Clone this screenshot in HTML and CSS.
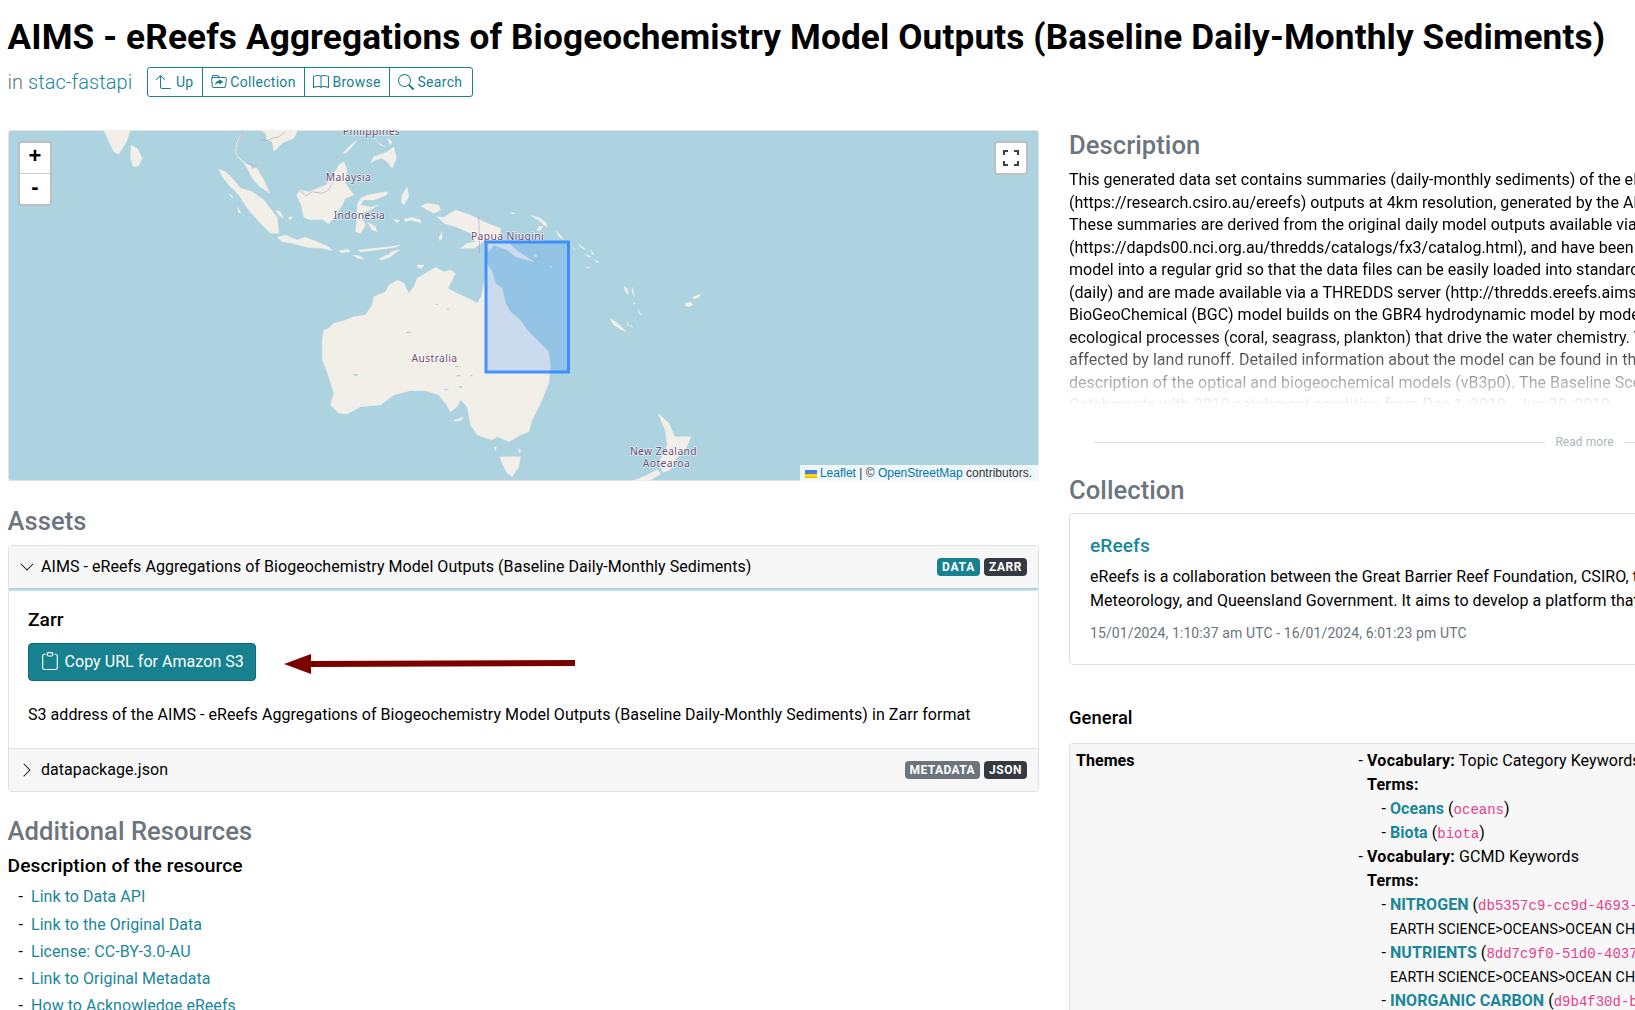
FILE: index.html
```html
<!DOCTYPE html>
<html lang="en">
<head>
  <meta charset="UTF-8" />
  <title>AIMS - eReefs Aggregations of Biogeochemistry Model Outputs</title>
  <link rel="stylesheet" href="styles.css">
</head>
<body>
  <h1>AIMS - eReefs Aggregations of Biogeochemistry Model Outputs (Baseline Daily-Monthly Sediments)</h1>
  <div class="subtitle">
    <span class="catalog"><span class="in">in</span> <a href="#">stac-fastapi</a></span>
    <div class="btn-group">
      <a href="#" class="btn"><svg class="icon" viewBox="0 0 16 16"><path d="M4.854 1.146a.5.5 0 0 0-.708 0l-4 4a.5.5 0 1 0 .708.708L4 2.707V12.5A2.5 2.5 0 0 0 6.5 15h8a.5.5 0 0 0 0-1h-8A1.5 1.5 0 0 1 5 12.5V2.707l3.146 3.147a.5.5 0 1 0 .708-.708l-4-4z"/></svg> Up</a>
      <a href="#" class="btn"><svg class="icon" viewBox="0 0 16 16"><path d="m11.798 8.271-3.182 1.97c-.27.166-.616-.036-.616-.372V9.1s-2.571-.3-4 2.4c.571-4.8 3.143-4.8 4-4.8v-.769c0-.336.346-.538.616-.371l3.182 1.969c.27.166.27.576 0 .742z"/><path d="m.5 3 .04.87a1.99 1.99 0 0 0-.342 1.311l.637 7A2 2 0 0 0 2.826 14h10.348a2 2 0 0 0 1.991-1.819l.637-7A2 2 0 0 0 13.81 3H9.828a2 2 0 0 1-1.414-.586l-.828-.828A2 2 0 0 0 6.172 1H2.5a2 2 0 0 0-2 2zm.694 2.09A1 1 0 0 1 2.19 4h11.62a1 1 0 0 1 .996 1.09l-.636 7a1 1 0 0 1-.996.91H2.826a1 1 0 0 1-.995-.91l-.637-7zM6.172 2a1 1 0 0 1 .707.293L7.586 3H2.19c-.24 0-.47.042-.683.12L1.5 2.98a1 1 0 0 1 1-.98h3.672z"/></svg> Collection</a>
      <a href="#" class="btn"><svg class="icon" viewBox="0 0 16 16"><path d="M1 2.828c.885-.37 2.154-.769 3.388-.893 1.33-.134 2.458.063 3.112.752v9.746c-.935-.53-2.12-.603-3.213-.493-1.18.12-2.37.461-3.287.811V2.828zm7.5-.141c.654-.689 1.782-.886 3.112-.752 1.234.124 2.503.523 3.388.893v9.923c-.918-.35-2.107-.692-3.287-.81-1.094-.111-2.278-.039-3.213.492V2.687zM8 1.783C7.015.936 5.587.81 4.287.94c-1.514.153-3.042.672-3.994 1.105A.5.5 0 0 0 0 2.5v11a.5.5 0 0 0 .707.455c.882-.4 2.303-.881 3.68-1.02 1.409-.142 2.59.087 3.223.877a.5.5 0 0 0 .78 0c.633-.79 1.814-1.019 3.222-.877 1.378.139 2.8.62 3.681 1.02A.5.5 0 0 0 16 13.5v-11a.5.5 0 0 0-.293-.455c-.952-.433-2.48-.952-3.994-1.105C10.413.809 8.985.936 8 1.783z"/></svg> Browse</a>
      <a href="#" class="btn"><svg class="icon" viewBox="0 0 16 16"><path d="M11.742 10.344a6.5 6.5 0 1 0-1.397 1.398h-.001c.03.04.062.078.098.115l3.85 3.85a1 1 0 0 0 1.415-1.414l-3.85-3.85a1.007 1.007 0 0 0-.115-.1zM12 6.5a5.5 5.5 0 1 1-11 0 5.5 5.5 0 0 1 11 0z"/></svg> Search</a>
    </div>
  </div>

  <div class="columns">
    <div class="col">
      <div class="map">
        <svg class="map-canvas" viewBox="7.5 130 1031.5 351">
          <g class="land">
            <!-- india, sri lanka -->
            <g transform="translate(0 125) scale(.3333)">
              <path d="M310 15 390 15 378 50 355 88 340 80 325 50Z"/>
              <path d="M392 60 412 72 425 100 415 122 398 125 390 100Z"/>
            </g>
            <!-- south east asia -->
            <g transform="translate(210 130) scale(.3333)">
              <path d="M25 118 45 125 70 150 90 175 125 185 160 210 200 262 205 310 180 310 150 280 110 235 85 195 55 165 35 140Z"/>
              <path d="M200 322 225 315 260 330 285 322 320 335 355 350 365 362 335 355 290 352 245 340 215 335Z"/>
              <path d="M385 362 415 358 418 366 392 368ZM442 360 490 355 535 350 570 345 555 352 500 360 450 366ZM505 388 545 365 570 358 540 380 515 390ZM428 375 450 378 460 388 440 384Z"/>
              <path d="M95 5 85 35 75 60 80 78 100 95 125 110 140 115 160 150 178 190 150 172 125 145 112 118 100 98 85 85 76 70 78 40Z"/>
              <path d="M150 0 262 0 250 25 215 40 190 65 185 35 170 30 165 10Z"/>
              <path d="M258 195 270 180 295 185 345 165 365 140 385 105 400 95 410 120 405 160 430 195 405 205 395 225 380 250 355 282 335 268 300 270 280 262 272 225Z"/>
              <path d="M440 225 450 205 470 195 530 185 530 195 490 210 460 210 450 225 480 232 505 225 480 240 460 245 455 265 465 285 450 310 435 305 440 265ZM470 275 495 290 500 305 485 300Z"/>
              <path d="M480 100 490 80 530 65 550 50 558 85 545 115 530 95 515 85 495 90ZM397 70 420 45 440 30 425 50 405 70ZM490 20 510 45 525 50 505 40ZM530 25 545 35 540 45Z"/>
              <path d="M575 195 590 170 595 200 580 225 572 215ZM548 268 568 270 560 278ZM580 268 605 262 630 270 632 278 600 270 585 275ZM195 240 210 245 218 265 205 255ZM235 262 245 260 243 268 235 268ZM55 190 68 200 65 205ZM80 230 92 250 85 248ZM620 405 640 407 625 415Z"/>
              <path d="M632 228 650 220 685 225 690 240 670 250 650 240ZM680 260 700 262 735 240 780 255 830 280 870 295 870 330 825 330 805 345 790 355 750 355 770 340 795 335 780 310 735 290 700 280ZM685 325 695 305 695 325 688 332Z"/>
            </g>
            <!-- png and pacific islands -->
            <g transform="translate(460 200) scale(.3333)">
              <path d="M75 130 145 130 175 155 220 185 190 178 165 170 140 150 100 135 85 155Z"/>
              <path d="M150 37 165 40 155 42ZM210 45 240 55 258 70 258 82 240 65ZM235 80 248 78 240 92 228 90ZM287 92 305 112 310 120 295 110ZM335 140 345 150 340 148ZM350 130 375 148 368 148ZM372 163 392 170 385 172ZM390 148 402 165 395 162ZM402 178 417 188 408 186ZM225 160 230 170 220 170ZM265 198 275 200 270 203Z"/>
              <path d="M490 258 500 265 505 285 495 275ZM515 262 522 290 516 280ZM518 305 525 312 520 312ZM532 328 542 345 536 340ZM448 355 470 368 498 395 480 388 460 375ZM500 365 505 378 502 378ZM510 375 518 382 512 380ZM675 310 690 305 697 315 685 320 675 318ZM695 292 720 283 715 292 700 297ZM378 200 388 204 382 205Z"/>
            </g>
            <!-- australia, tasmania -->
            <g transform="translate(310 260) scale(.3333)">
              <path d="M40 210 55 205 70 190 100 182 130 170 165 165 185 135 190 110 225 95 235 75 262 60 280 70 295 100 310 80 320 55 345 40 375 22 400 35 420 30 435 40 428 55 412 85 440 100 480 118 500 130 512 110 525 50 530 12 545 35 555 70 575 85 585 130 600 155 630 180 650 210 680 240 700 260 715 275 720 320 715 370 690 430 665 480 655 515 630 525 595 545 560 530 545 540 500 525 480 495 470 440 450 420 440 440 420 455 405 430 385 405 345 392 300 392 250 405 210 435 150 440 110 462 85 460 60 435 70 400 50 335 35 300 35 240Z"/>
              <path d="M568 590 630 590 625 620 605 650 590 640 575 610ZM430 480 460 472 450 482 432 484ZM320 15 340 15 332 26ZM552 560 558 562 555 572ZM622 565 630 570 628 580Z"/>
              <path class="lake" d="M288 215h14v4h-14zM375 132h6v3h-6zM408 146h8v3h-8zM130 342h12v5h-12zM434 318h10v4h-10zM438 345h12v4h-12zM445 378h10v5h-10zM480 345h6v4h-6zM400 388h14v3h-14z"/>
            </g>
            <!-- new zealand -->
            <path d="M658 414 668 423 674 437 690 437 685 449 676 458 669 470 662 472 660 460 667 445 665 430Z"/>
            <path d="M657 470 660 474 648 481 633 481 645 476Z"/>
          </g>
          <g class="borders">
            <g transform="translate(210 130) scale(.3333)">
              <path d="M97 0 80 45M150 30 170 32 185 25 205 20 225 5M105 98 125 105 125 115 140 105M270 183 285 198 305 185 335 190 355 180 370 150M805 258 807 370M530 362 535 375"/>
            </g>
          </g>
          <g class="labels">
            <text x="371" y="135" text-anchor="middle">Philippines</text>
            <text x="348" y="181" text-anchor="middle">Malaysia</text>
            <text x="359" y="219" text-anchor="middle">Indonesia</text>
            <text x="507" y="240" text-anchor="middle">Papua Niugini</text>
            <text x="434" y="362" text-anchor="middle">Australia</text>
            <text x="663" y="455" text-anchor="middle">New Zealand</text>
            <text x="666" y="467" text-anchor="middle">Aotearoa</text>
          </g>
          <rect class="bbox" x="485.5" y="242" width="82.5" height="130"/>
        </svg>
        <div class="zoom-ctl">
          <a href="#" class="zoom-btn">+</a>
          <a href="#" class="zoom-btn">-</a>
        </div>
        <a href="#" class="full-ctl"><svg viewBox="0 0 16 16" width="16" height="16"><path d="M1 5V1h4M11 1h4v4M15 11v4h-4M5 15H1v-4"/></svg></a>
        <div class="attribution">
          <svg class="flag" viewBox="0 0 12 8" width="12" height="8"><path fill="#4c7be1" d="M0 0h12v4H0z"/><path fill="#ffd500" d="M0 4h12v3H0z"/><path fill="#e0bc00" d="M0 7h12v1H0z"/></svg>
          <a href="#">Leaflet</a> | © <a href="#">OpenStreetMap</a> contributors.
        </div>
      </div>

      <h2 class="assets-title">Assets</h2>
      <div class="accordion">
        <div class="acc-head open">
          <svg class="chevron" viewBox="0 0 16 16"><path d="M1.646 4.646a.5.5 0 0 1 .708 0L8 10.293l5.646-5.647a.5.5 0 0 1 .708.708l-6 6a.5.5 0 0 1-.708 0l-6-6a.5.5 0 0 1 0-.708z"/></svg>
          <span class="acc-title">AIMS - eReefs Aggregations of Biogeochemistry Model Outputs (Baseline Daily-Monthly Sediments)</span>
          <span class="badge teal">DATA</span>
          <span class="badge dark">ZARR</span>
        </div>
        <div class="acc-body">
          <h4>Zarr</h4>
          <a href="#" class="copy-btn"><svg class="icon" viewBox="0 0 16 16"><path d="M4 1.5H3a2 2 0 0 0-2 2V14a2 2 0 0 0 2 2h10a2 2 0 0 0 2-2V3.5a2 2 0 0 0-2-2h-1v1h1a1 1 0 0 1 1 1V14a1 1 0 0 1-1 1H3a1 1 0 0 1-1-1V3.5a1 1 0 0 1 1-1h1v-1z"/><path d="M9.5 1a.5.5 0 0 1 .5.5v1a.5.5 0 0 1-.5.5h-3a.5.5 0 0 1-.5-.5v-1a.5.5 0 0 1 .5-.5h3zm-3-1A1.5 1.5 0 0 0 5 1.5v1A1.5 1.5 0 0 0 6.5 4h3A1.5 1.5 0 0 0 11 2.5v-1A1.5 1.5 0 0 0 9.5 0h-3z"/></svg> Copy URL for Amazon S3</a>
          <svg class="red-arrow" viewBox="0 0 292 20" width="292" height="20"><path d="M0 10 27 0V7L291 6V12L27 13V20Z"/></svg>
          <p>S3 address of the AIMS - eReefs Aggregations of Biogeochemistry Model Outputs (Baseline Daily-Monthly Sediments) in Zarr format</p>
        </div>
        <div class="acc-head last">
          <svg class="chevron" viewBox="0 0 16 16"><path d="M4.646 1.646a.5.5 0 0 1 .708 0l6 6a.5.5 0 0 1 0 .708l-6 6a.5.5 0 0 1-.708-.708L10.293 8 4.646 2.354a.5.5 0 0 1 0-.708z"/></svg>
          <span class="acc-title">datapackage.json</span>
          <span class="badge grey">METADATA</span>
          <span class="badge dark">JSON</span>
        </div>
      </div>

      <h2 class="resources-title">Additional Resources</h2>
      <h3 class="resource-name">Description of the resource</h3>
      <ul class="resources">
        <li><a href="#">Link to Data API</a></li>
        <li><a href="#">Link to the Original Data</a></li>
        <li><a href="#">License: CC-BY-3.0-AU</a></li>
        <li><a href="#">Link to Original Metadata</a></li>
        <li><a href="#">How to Acknowledge eReefs</a></li>
      </ul>
    </div>

    <div class="col">
      <h2 class="desc-title">Description</h2>
      <div class="description">
        This generated data set contains summaries (daily-monthly sediments) of the eReefs<br>
        (https://research.csiro.au/ereefs) outputs at 4km resolution, generated by the AIMS<br>
        These summaries are derived from the original daily model outputs available via the<br>
        (https://dapds00.nci.org.au/thredds/catalogs/fx3/catalog.html), and have been regridded<br>
        model into a regular grid so that the data files can be easily loaded into standard<br>
        (daily) and are made available via a THREDDS server (http://thredds.ereefs.aims.gov.au<br>
        BioGeoChemical (BGC) model builds on the GBR4 hydrodynamic model by modelling<br>
        ecological processes (coral, seagrass, plankton) that drive the water chemistry. The<br>
        affected by land runoff. Detailed information about the model can be found in the<br>
        description of the optical and biogeochemical models (vB3p0). The Baseline Scenario<br>
        Catchments with 2010 catchment condition from Dec 1, 2010 - Jun 30, 2019
      </div>
      <div class="read-more"><span>Read more</span></div>

      <h2 class="coll-title">Collection</h2>
      <div class="card">
        <a href="#" class="card-title">eReefs</a>
        <p>eReefs is a collaboration between the Great Barrier Reef Foundation, CSIRO, the<br>Meteorology, and Queensland Government. It aims to develop a platform that</p>
        <small>15/01/2024, 1:10:37 am UTC - 16/01/2024, 6:01:23 pm UTC</small>
      </div>

      <h3 class="general">General</h3>
      <div class="meta-table">
        <div class="meta-key">Themes</div>
        <div class="meta-value">
          <ul>
            <li><b>Vocabulary:</b> Topic Category Keywords<br><b>Terms:</b>
              <ul>
                <li><a href="#">Oceans</a> (<code>oceans</code>)</li>
                <li><a href="#">Biota</a> (<code>biota</code>)</li>
              </ul>
            </li>
            <li><b>Vocabulary:</b> GCMD Keywords<br><b>Terms:</b>
              <ul>
                <li><a href="#">NITROGEN</a> (<code>db5357c9-cc9d-4693-a1b2-000000000000</code>)<br><span class="path">EARTH SCIENCE&gt;OCEANS&gt;OCEAN CHEMISTRY&gt;NITROGEN</span></li>
                <li><a href="#">NUTRIENTS</a> (<code>8dd7c9f0-51d0-4037-a1b2-000000000000</code>)<br><span class="path">EARTH SCIENCE&gt;OCEANS&gt;OCEAN CHEMISTRY&gt;NUTRIENTS</span></li>
                <li><a href="#">INORGANIC CARBON</a> (<code>d9b4f30d-b000-4000-a000-000000000000</code>)</li>
              </ul>
            </li>
          </ul>
        </div>
      </div>
    </div>
  </div>
</body>
</html>
```

FILE: styles.css
```css
html {
  overflow: hidden;
  height: 1010px;
}

body {
  margin: 0;
  padding: 16px 8px 0 7.5px;
  width: 2092.5px;
  font-family: Roboto, sans-serif;
  font-size: 16px;
  line-height: 24px;
  letter-spacing: .05px;
  color: #000;
  background: #fff;
}

a {
  color: #1a8799;
  text-decoration: none;
}

h1 {
  margin: 0;
  font-size: 35.2px;
  line-height: 42px;
  font-weight: 700;
  letter-spacing: .12px;
  white-space: nowrap;
}

h2 {
  font-size: 25.6px;
  line-height: 30px;
  font-weight: 500;
  color: #6c757d;
  margin: 0;
}

h3 {
  font-size: 18.4px;
  line-height: 24px;
  font-weight: 500;
  margin: 8px 0 0;
}

h4 {
  font-size: 19.2px;
  line-height: 24px;
  font-weight: 500;
  margin: 0;
}

.icon {
  width: 16px;
  height: 16px;
  fill: currentColor;
  vertical-align: -3px;
}

/* subtitle row */
.subtitle {
  display: flex;
  align-items: center;
  margin-top: 9px;
  height: 30px;
}

.catalog {
  font-size: 20px;
  font-weight: 300;
  margin-right: 15px;
}

.in {
  color: #6c757d;
}

.btn-group {
  display: flex;
  height: 30px;
  border: 1px solid #17818f;
  border-radius: 3px;
  box-sizing: border-box;
}

.btn {
  padding: 0 8px;
  font-size: 14px;
  line-height: 28px;
  letter-spacing: .3px;
  color: #17818f;
  border-left: 1px solid #17818f;
  white-space: nowrap;
}

.btn:first-child {
  border-left: 0;
}

.btn:last-child {
  padding-right: 10px;
}

.columns {
  display: grid;
  grid-template-columns: 1031.5px 1031px;
  gap: 30px;
  margin-top: 33px;
}

/* map */
.map {
  position: relative;
  height: 351px;
  border-radius: 4px;
  overflow: hidden;
  background: #acd3df;
  box-shadow: inset 0 0 0 1px #dde3e6;
}

.map-canvas {
  display: block;
  width: 100%;
  height: 100%;
}

.land path {
  fill: #f2efe9;
  stroke: #f2efe9;
  stroke-width: 1;
  stroke-linejoin: round;
}

.land .lake {
  fill: #acd3df;
  stroke: none;
}

.borders path {
  fill: none;
  stroke: #b9a3bb;
  stroke-width: 2;
}

.labels text {
  font-family: "Noto Sans", sans-serif;
  font-size: 10.3px;
  letter-spacing: .4px;
  fill: #6f4f78;
  stroke: #fff;
  stroke-opacity: .6;
  stroke-width: 1.5px;
  paint-order: stroke;
}

.bbox {
  fill: #3388ff;
  fill-opacity: .2;
  stroke: #3388ff;
  stroke-width: 3;
  stroke-opacity: .9;
}

.zoom-ctl {
  position: absolute;
  left: 10.5px;
  top: 11px;
  width: 30px;
  border: 2px solid rgba(0, 0, 0, .25);
  border-radius: 4px;
  background: #fff;
}

.zoom-btn {
  display: block;
  height: 30px;
  line-height: 26px;
  text-align: center;
  font-family: "Liberation Sans", sans-serif;
  font-size: 22px;
  font-weight: 700;
  color: #000;
}

.zoom-btn:first-child {
  border-bottom: 1px solid #ccc;
}

.full-ctl {
  position: absolute;
  right: 11px;
  top: 11px;
  width: 30px;
  height: 30px;
  border: 2px solid rgba(0, 0, 0, .25);
  border-radius: 4px;
  background: #fff;
  display: flex;
  align-items: center;
  justify-content: center;
}

.full-ctl path {
  fill: none;
  stroke: #404040;
  stroke-width: 2;
}

.attribution {
  position: absolute;
  right: 0;
  bottom: 0;
  height: 16px;
  line-height: 16px;
  padding: 0 7px 0 5px;
  font-family: "Liberation Sans", sans-serif;
  font-size: 12px;
  letter-spacing: 0;
  color: #333;
  background: rgba(255, 255, 255, .8);
  white-space: nowrap;
}

.attribution a {
  color: #0078a8;
}

.flag {
  vertical-align: -1px;
}

/* assets */
.assets-title {
  margin-top: 25px;
}

.accordion {
  margin-top: 9px;
  border: 1px solid #dee2e6;
  border-radius: 4px;
}

.acc-head {
  display: flex;
  align-items: center;
  height: 42px;
  padding: 0 11px 0 10px;
  background: #f7f7f7;
  border-radius: 4px 4px 0 0;
}

.acc-head.open {
  border-bottom: 1px solid #a8ccd3;
  box-shadow: 0 2px 0 #c5e0e5;
}

.acc-head.last {
  border-top: 1px solid #dee2e6;
  border-radius: 0 0 4px 4px;
}

.chevron {
  width: 16px;
  height: 16px;
  fill: #111;
  margin-right: 6.5px;
  flex: none;
}

.acc-title {
  flex: 1;
  white-space: nowrap;
}

.badge {
  margin-left: 4px;
  padding: 0 5px;
  height: 18px;
  line-height: 18px;
  border-radius: 4px;
  font-size: 12px;
  font-weight: 700;
  letter-spacing: .55px;
  color: #fff;
}

.teal {
  background: #17818f;
  letter-spacing: .8px;
}

.dark {
  background: #343a40;
}

.grey {
  background: #6c757d;
  letter-spacing: .4px;
}

.acc-body {
  position: relative;
  padding: 19px 19px 21px 19.5px;
}

.copy-btn {
  display: inline-block;
  margin-top: 11px;
  padding: 0 11px 0 12px;
  height: 38px;
  line-height: 36px;
  box-sizing: border-box;
  background: #17818f;
  border: 1px solid #126873;
  border-radius: 4px;
  color: #fff;
}

.copy-btn .icon {
  width: 18px;
  height: 18px;
  margin-right: 1.5px;
}

.red-arrow {
  position: absolute;
  left: 275px;
  top: 65px;
  fill: #7b0000;
}

.acc-body p {
  margin: 22px 0 0;
}

/* resources */
.resources-title {
  margin-top: 24px;
}

.resource-name {
  font-size: 19.2px;
  letter-spacing: .1px;
}

.resources {
  list-style-type: "-\00a0\00a0";
  margin: 7px 0 0;
  padding: 0 0 0 23.5px;
}

.resources li {
  margin-bottom: 3px;
}

.resources li:first-child {
  margin-bottom: 4px;
}

/* right column */
.description {
  margin-top: 9px;
  height: 237px;
  overflow: hidden;
  line-height: 22.5px;
  letter-spacing: .02px;
  white-space: nowrap;
  -webkit-mask-image: linear-gradient(#000 70%, transparent);
  mask-image: linear-gradient(#000 70%, transparent);
}

.read-more {
  display: flex;
  align-items: center;
  gap: 10px;
  margin: 27px 25px 0;
  height: 18px;
  font-size: 12px;
  color: #adb5bd;
}

.read-more::before,
.read-more::after {
  content: "";
  flex: 1;
  border-top: 1px solid #dee2e6;
}

.coll-title {
  margin-top: 24px;
}

.card {
  margin-top: 8px;
  padding: 20px;
  height: 152px;
  box-sizing: border-box;
  border: 1px solid #dee2e6;
  border-radius: 4px;
  white-space: nowrap;
}

.card-title {
  display: block;
  font-size: 19.2px;
  font-weight: 500;
}

.card p {
  margin: 7px 0 0;
}

.card small {
  display: block;
  margin-top: 10px;
  font-size: 14px;
  line-height: 20px;
  letter-spacing: .1px;
  color: #6c757d;
}

.general {
  margin-top: 41px;
}

.meta-table {
  display: grid;
  grid-template-columns: 280px 1fr;
  margin-top: 13px;
  padding: 5px 6px;
  height: 400px;
  border: 1px solid #dee2e6;
  border-radius: 4px;
  background: #f7f7f7;
  white-space: nowrap;
}

.meta-key,
.meta-value a {
  font-weight: 700;
}

.meta-value b {
  font-weight: 700;
  letter-spacing: .25px;
}

.meta-value ul {
  list-style-type: "-\00a0";
  margin: 0;
  padding-left: 11px;
}

.meta-value ul ul {
  padding-left: 23px;
}

.path {
  font-size: 14.2px;
}

code {
  font-family: "Liberation Mono", monospace;
  font-size: 14px;
  line-height: 1;
  letter-spacing: 0;
  color: #e83e8c;
}
```
